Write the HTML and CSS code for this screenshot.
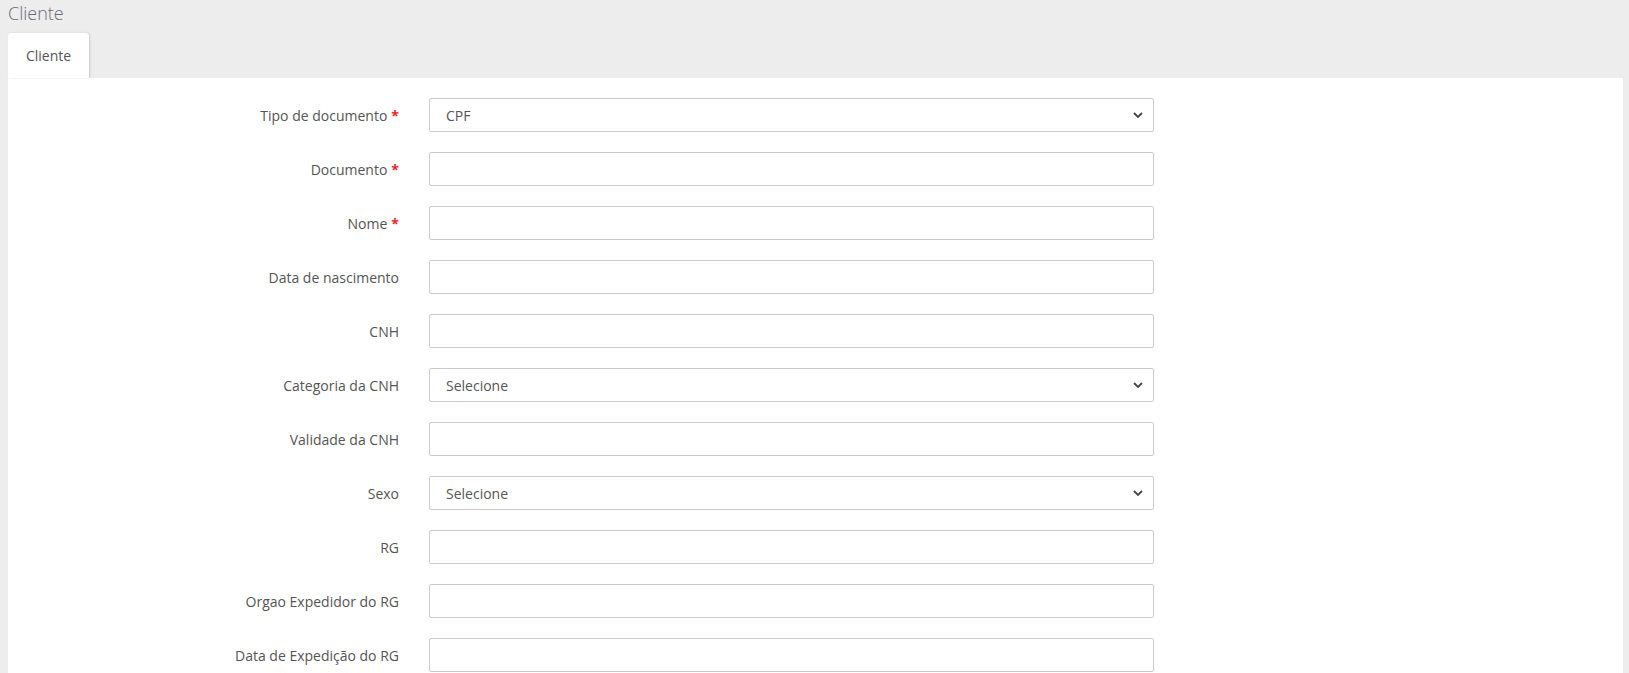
FILE: index.html
```html
<!DOCTYPE html>
<html lang="pt-BR">
<head>
<meta charset="utf-8">
<title>Cliente</title>
<link rel="stylesheet" href="styles.css">
</head>
<body>
<div class="page-title">Cliente</div>
<div class="tabs"><div class="tab">Cliente</div></div>
<div class="panel">
  <div class="form">
    <label class="lbl">Tipo de documento <span class="req">*</span></label>
    <div class="field select"><span>CPF</span><svg class="chev" viewBox="0 0 10 6" width="10" height="6"><path d="M1 1l4 4 4-4" fill="none" stroke="#444" stroke-width="1.8"/></svg></div>

    <label class="lbl">Documento <span class="req">*</span></label>
    <div class="field"></div>

    <label class="lbl">Nome <span class="req">*</span></label>
    <div class="field"></div>

    <label class="lbl">Data de nascimento</label>
    <div class="field"></div>

    <label class="lbl">CNH</label>
    <div class="field"></div>

    <label class="lbl">Categoria da CNH</label>
    <div class="field select"><span>Selecione</span><svg class="chev" viewBox="0 0 10 6" width="10" height="6"><path d="M1 1l4 4 4-4" fill="none" stroke="#444" stroke-width="1.8"/></svg></div>

    <label class="lbl">Validade da CNH</label>
    <div class="field"></div>

    <label class="lbl">Sexo</label>
    <div class="field select"><span>Selecione</span><svg class="chev" viewBox="0 0 10 6" width="10" height="6"><path d="M1 1l4 4 4-4" fill="none" stroke="#444" stroke-width="1.8"/></svg></div>

    <label class="lbl">RG</label>
    <div class="field"></div>

    <label class="lbl">Orgao Expedidor do RG</label>
    <div class="field"></div>

    <label class="lbl">Data de Expedição do RG</label>
    <div class="field"></div>
  </div>
</div>
</body>
</html>
```
FILE: styles.css
```css
html, body {
  margin: 0;
  padding: 0;
}
body {
  background: #ededed;
  font-family: "Open Sans", "Noto Sans", sans-serif;
  color: #555;
  overflow: hidden;
}
.page-title {
  font-size: 18px;
  font-weight: 300;
  color: #6f6a7a;
  padding: 1px 0 0 8px;
  height: 33px;
  line-height: 24px;
  box-sizing: border-box;
}
.tabs {
  display: flex;
  padding-left: 8px;
}
.tab {
  width: 81px;
  height: 45px;
  background: #fff;
  border-radius: 3px 3px 0 0;
  box-shadow: 1px 0 2px rgba(0,0,0,0.15);
  font-size: 14px;
  color: #555;
  display: flex;
  align-items: center;
  justify-content: center;
  box-sizing: border-box;
}
.panel {
  background: #fff;
  margin: 0 6px 0 8px;
  padding-top: 20px;
  min-height: 600px;
}
.form {
  display: grid;
  grid-template-columns: 391px 725px;
  column-gap: 30px;
  row-gap: 20px;
}
.lbl {
  font-size: 14px;
  color: #555;
  text-align: right;
  display: flex;
  align-items: center;
  justify-content: flex-end;
  gap: 4px;
  height: 34px;
}
.req {
  color: #e8262b;
  font-weight: 700;
}
.field {
  height: 34px;
  box-sizing: border-box;
  border: 1px solid #ccc;
  border-radius: 2px;
  background: #fff;
}
.select {
  display: flex;
  align-items: center;
  justify-content: space-between;
  padding: 0 10px 0 16px;
  font-size: 14px;
  color: #555;
}
.chev {
  display: block;
}
```
